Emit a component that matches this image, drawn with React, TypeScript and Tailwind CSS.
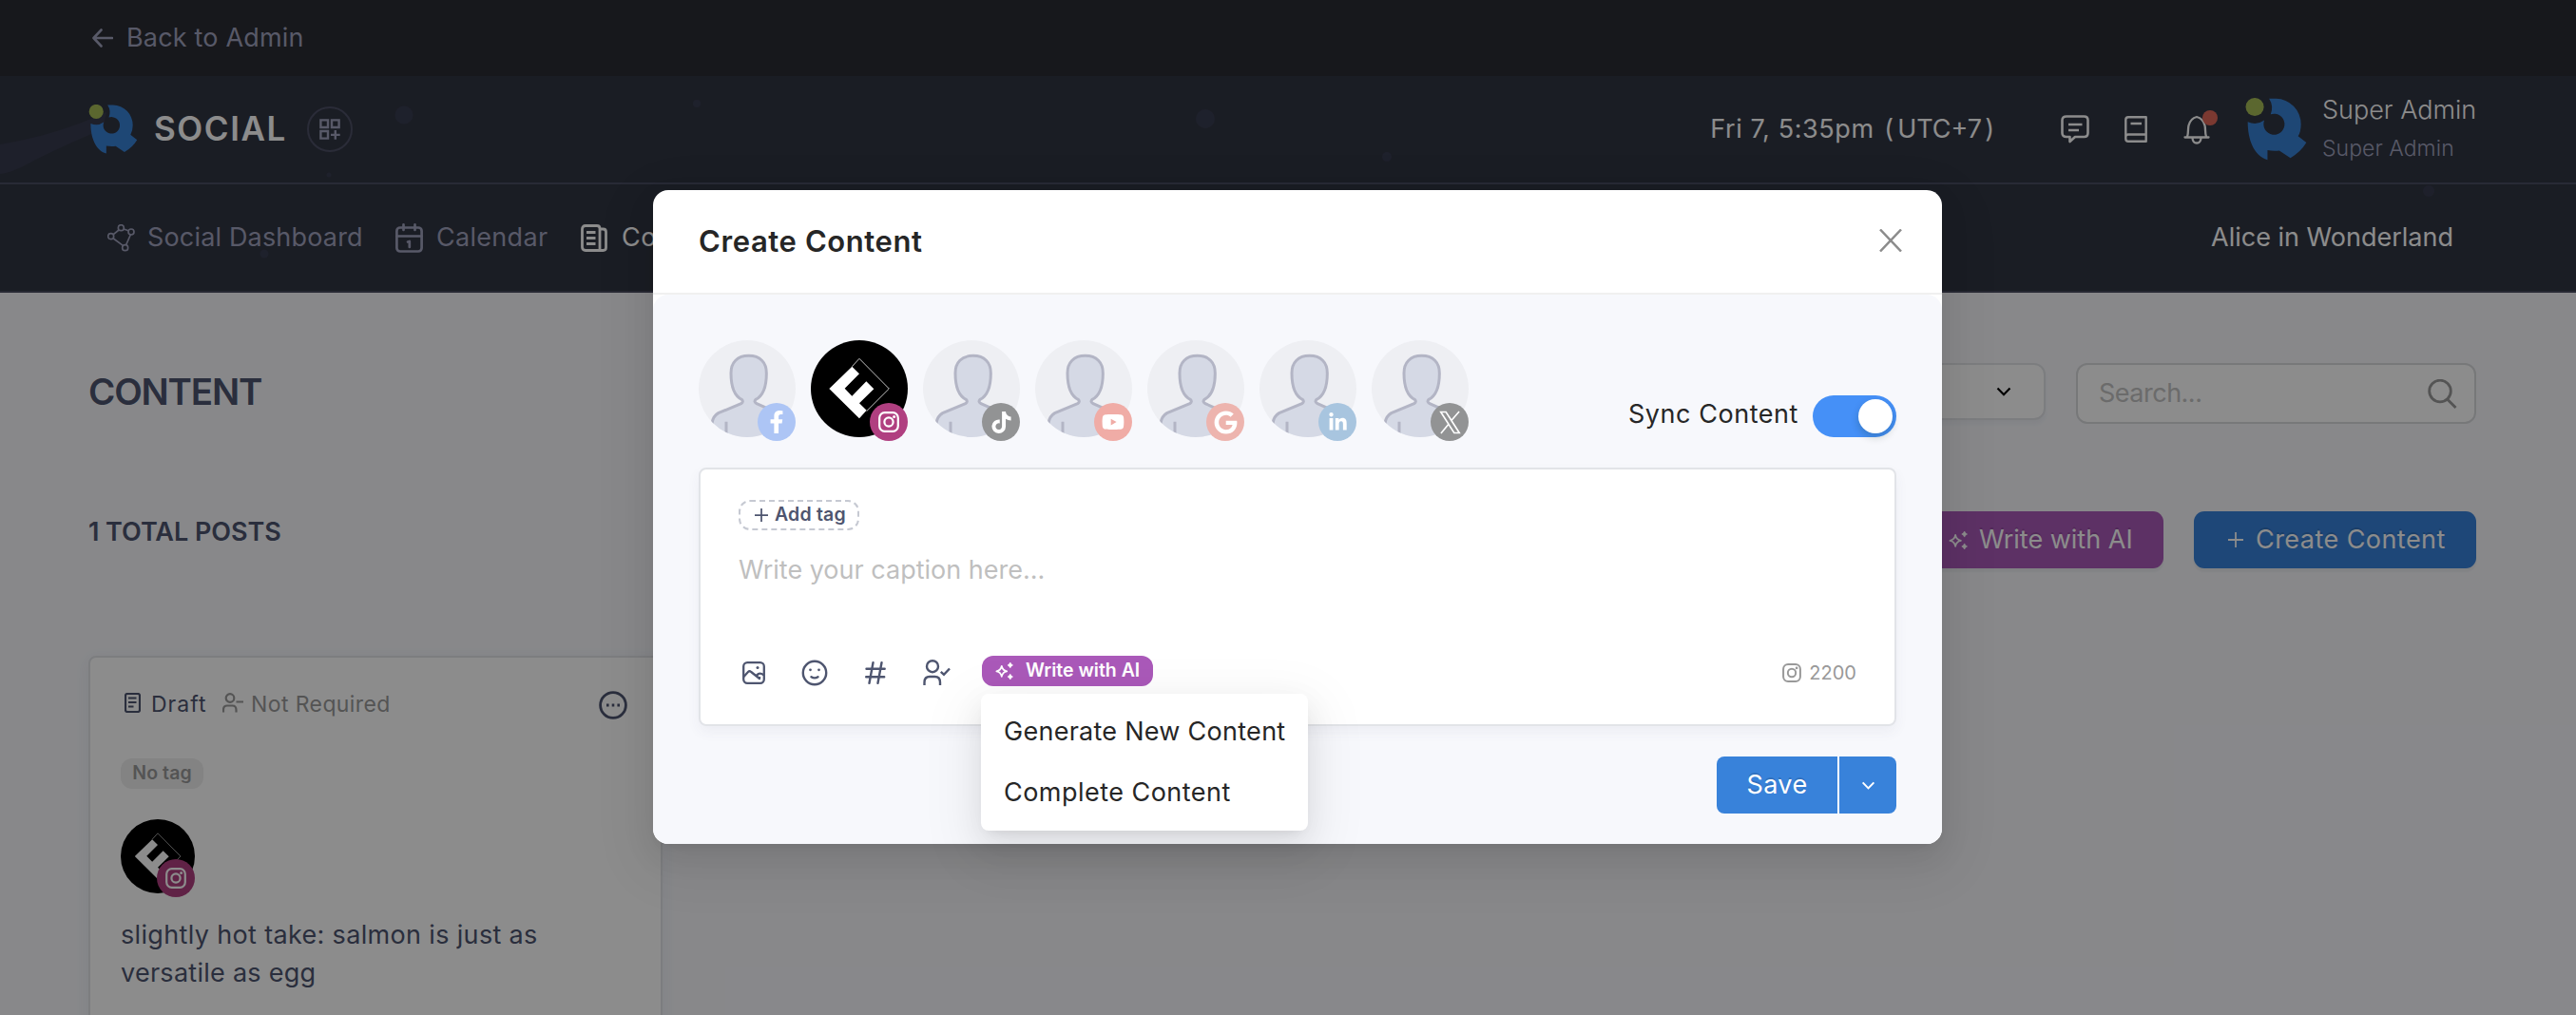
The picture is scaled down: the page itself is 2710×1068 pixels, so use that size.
import type { ReactNode } from "react";
import { FaFacebookF, FaGoogle, FaLinkedinIn, FaTiktok, FaYoutube } from "react-icons/fa";

function Logo({ className }: { className: string }) {
  return (
    <svg viewBox="638 40 194 196" className={className}>
      <circle cx="668" cy="68" r="28.5" fill="#a6bc57" />
      <path
        fill="#3882d5"
        d="M713 42H735A78 80 0 0 1 813 122Q813 145 804 160L830 180Q812 210 780 228L745 205Q727 207 708 204V234C665 222 646 170 646 115A52 52 0 0 0 698 110A33 33 0 1 0 718 91A54 54 0 0 0 713 42Z"
      />
    </svg>
  );
}

function Sparkles({ className }: { className: string }) {
  return (
    <svg viewBox="0 0 55 53" className={className}>
      <path d="M19.5 11Q22 25 35.500 27.500Q22 30 19.500 44Q17 30 3.500 27.500Q17 25 19.500 11Z" fill="none" stroke="currentColor" strokeWidth="5" strokeLinejoin="round" />
      <path d="M46 0Q48 6 54 8.500Q48 11 46 17Q44 11 38 8.500Q44 6 46 0Z M46 36Q48 42 54 44.500Q48 47 46 53Q44 47 38 44.500Q44 42 46 36Z" fill="currentColor" stroke="currentColor" strokeWidth="2" strokeLinejoin="round" />
    </svg>
  );
}

function InstagramGlyph({ className, strokeWidth = 2.2 }: { className: string; strokeWidth?: number }) {
  return (
    <svg viewBox="0 0 22 22" className={className} fill="none" stroke="currentColor" strokeWidth={strokeWidth}>
      <rect x="1.200" y="1.200" width="19.600" height="19.600" rx="5.500" />
      <circle cx="11" cy="11" r="4.600" />
      <circle cx="16.600" cy="5.400" r="1.500" fill="currentColor" stroke="none" />
    </svg>
  );
}

function XGlyph({ className }: { className: string }) {
  return (
    <svg viewBox="0 0 24 26" className={className} fill="none" stroke="currentColor" strokeWidth="1.700">
      <path d="M1.800 1.500H7.500L22.200 24.500H16.500ZM22 1L13.200 11.200M10.400 14.800L2 25" />
    </svg>
  );
}

function Plus({ className, strokeWidth = 1.8 }: { className: string; strokeWidth?: number }) {
  return (
    <svg viewBox="0 0 16 16" className={className} fill="none" stroke="currentColor" strokeWidth={strokeWidth}>
      <path d="M8 0V16M0 8H16" />
    </svg>
  );
}

function Chevron({ className, strokeWidth }: { className: string; strokeWidth: number }) {
  return (
    <svg viewBox="0 0 16 10" className={className} fill="none" stroke="currentColor" strokeWidth={strokeWidth}>
      <path d="M1.500 1.500L8 8.200L14.500 1.500" />
    </svg>
  );
}

function BrandMark({ className }: { className: string }) {
  return (
    <svg viewBox="0 0 306 306" className={className}>
      <circle cx="153" cy="153" r="153" fill="#000" />
      <path d="M130 83L153 58L247 153L176 224" fill="none" stroke="#c4c4c4" strokeWidth="3" />
      <path d="M58 153L130 83L153 106L107 152L130 176L175 130L199 154L153 199L176 221L153 247Z" fill="#fff" />
    </svg>
  );
}

function Person({ id, className }: { id: string; className: string }) {
  return (
    <svg viewBox="0 0 306 306" className={className}>
      <clipPath id={id}>
        <circle cx="153" cy="153" r="153" />
      </clipPath>
      <g clipPath={`url(#${id})`}>
        <rect width="306" height="306" fill="#eeeff3" />
        <path
          d="M158 49C194 49 214 70 214 104C214 148 202 176 180 187Q173 194 183 200L250 230Q275 245 275 330L42 330V262Q45 240 62 230L134 200Q143 194 136 187C114 176 102 148 102 104C102 70 122 49 158 49Z"
          fill="#d5d9e5"
          stroke="#b3b5c5"
          strokeWidth="9"
        />
        <path d="M87 257V306" stroke="#b3b5c5" strokeWidth="9" />
      </g>
    </svg>
  );
}

const badge = "absolute right-0 -bottom-1 flex size-10 items-center justify-center rounded-full text-white";

const accounts: { id: string; color: string; icon: ReactNode; selected?: boolean }[] = [
  { id: "facebook", color: "bg-[#adc5f5]", icon: <FaFacebookF className="size-6" /> },
  { id: "instagram", color: "bg-[#b03f80]", icon: <InstagramGlyph className="size-[22px]" />, selected: true },
  { id: "tiktok", color: "bg-[#929394]", icon: <FaTiktok className="size-[23px]" /> },
  { id: "youtube", color: "bg-[#f0aca6]", icon: <FaYoutube className="size-6" /> },
  { id: "google", color: "bg-[#edb4ae]", icon: <FaGoogle className="size-[25px]" /> },
  { id: "linkedin", color: "bg-[#a8c5df]", icon: <FaLinkedinIn className="size-[21px]" /> },
  { id: "x", color: "bg-[#929394]", icon: <XGlyph className="h-[25px] w-[23px]" /> },
];

function TopBar() {
  return (
    <div className="flex h-20 shrink-0 items-center bg-[#2a2c33] pl-[97px] text-[#a0a3bd]">
      <svg viewBox="0 0 22 20" className="mr-3.5 h-5 w-[22px]" fill="none" stroke="currentColor" strokeWidth="2.600" strokeLinecap="round" strokeLinejoin="round">
        <path d="M21 10H2M9.500 1.500L1.500 10L9.500 18.500" />
      </svg>
      <span className="text-[27px] tracking-[0.180px]">Back to Admin</span>
    </div>
  );
}

function Particles() {
  return (
    <svg viewBox="0 0 2710 228" className="absolute inset-0 h-[228px] w-[2710px]" fill="#3b3f54">
      <path d="M0 72Q60 62 112 38L108 56Q60 76 30 92Q12 102 0 103Z" opacity=".7" />
      <circle cx="425" cy="41" r="9.500" opacity=".8" />
      <circle cx="1268" cy="45" r="10" opacity=".8" />
      <circle cx="733" cy="29" r="4" opacity=".8" />
      <circle cx="1459" cy="85" r="5" opacity=".8" />
      <circle cx="278" cy="187" r="4.500" opacity=".8" />
      <circle cx="346" cy="104" r="2.500" opacity=".8" />
      <circle cx="2555" cy="121" r="6" opacity=".7" />
    </svg>
  );
}

function Header() {
  return (
    <header className="relative shrink-0 bg-[#313543] whitespace-nowrap">
      <Particles />
      <div className="relative flex h-[114px] items-center border-b-2 border-[#4a4d63] pr-[105px] pl-[93px]">
        <Logo className="mr-[17px] size-[52px]" />
        <span className="-mt-0.5 w-[142px] text-[35px] font-semibold tracking-[1.600px] text-white">SOCIAL</span>
        <div className="ml-[19px] flex size-12 items-center justify-center rounded-full border-2 border-[#4d5066] text-[#a0a3bd]">
          <svg viewBox="0 0 22 22" className="size-[22px]" fill="none" stroke="currentColor" strokeWidth="2.400">
            <path d="M1.400 1.400H9V9H1.400ZM13 1.400H20.600V9H13ZM1.400 13H9V20.600H1.400ZM16.800 12V21.800M12 16.900H21.700" />
          </svg>
        </div>
        <div className="ml-auto flex items-center text-white">
          <span className="w-[175px] text-[27px] tracking-[0.600px]">Fri 7, 5:35pm</span>
          <span className="ml-2 text-[27px]">(</span>
          <span className="ml-1 w-[88px] text-[27px]">UTC+7</span>
          <span className="ml-1 text-[27px]">)</span>
          <svg viewBox="0 0 30 30" className="ml-[70px] size-[30px]" fill="none" stroke="currentColor" strokeWidth="2.600" strokeLinejoin="round">
            <path d="M6 1.500H24.500Q28.500 1.500 28.500 5.500V19Q28.500 23 24.500 23H15L9.500 28V23H6Q1.500 23 1.500 19V5.500Q1.500 1.500 6 1.500ZM8 10H22.500M8 16H19" />
          </svg>
          <svg viewBox="0 0 24 28" className="ml-[37px] h-7 w-6" fill="none" stroke="currentColor" strokeWidth="2.400" strokeLinejoin="round">
            <path d="M4 1.300H22.700V26.700H4Q1.300 26.700 1.300 24V4Q1.300 1.300 4 1.300ZM1.300 22Q1.500 19.500 4 19.500H22.500M6.500 8H18" />
          </svg>
          <div className="relative ml-[38px] h-[31px] w-7">
            <svg viewBox="0 0 28 31" className="h-[31px] w-7" fill="none" stroke="currentColor" strokeWidth="2.300" strokeLinejoin="round" strokeLinecap="round">
              <path d="M1.500 23.500H26.500M4 23C5.500 19 4.500 15 5.500 11Q7.500 3.500 14 2Q20.500 3.500 22.500 11C23.500 15 22.500 19 24 23M9.500 24.500Q10 29.500 14 29.500Q18 29.500 18.500 24.500" />
            </svg>
            <span className="absolute -top-[5px] left-5 size-4 rounded-full bg-[#e0695a]" />
          </div>
          <Logo className="ml-[37px] h-[66px] w-[65px]" />
          <div className="ml-4 flex w-[162px] flex-col font-light">
            <span className="text-[27px] leading-[41px]">Super Admin</span>
            <span className="text-[23px] leading-[41px] tracking-[0.050px] text-[#a0a3bd]">Super Admin</span>
          </div>
        </div>
      </div>
      <nav className="relative flex h-[114px] items-center border-b-2 border-[#474a5e] pl-[113px] text-[27px] text-[#a0a3bd]">
        <svg viewBox="98 422 87 87" className="size-[29px]" fill="none" stroke="currentColor" strokeWidth="5">
          <path d="M117 454L134 440M150 437L164 442M171 455L157 487M117 467L147 489" />
          <circle cx="141" cy="433" r="9" />
          <circle cx="173" cy="446" r="9" />
          <circle cx="109" cy="460" r="9" />
          <circle cx="154" cy="496" r="9" />
        </svg>
        <span className="ml-[13px] w-[226px] tracking-[0.170px]">Social Dashboard</span>
        <svg viewBox="0 0 29 31" className="ml-[35px] h-[31px] w-[29px]" fill="none" stroke="currentColor" strokeWidth="2.700" strokeLinecap="round" strokeLinejoin="round">
          <rect x="1.400" y="4.500" width="26.200" height="25" rx="3.500" />
          <path d="M1.500 13.500H27.500M8.500 1.400V7M20.500 1.400V7M13 19.500L14.800 19V25" />
        </svg>
        <span className="ml-[14px] w-[118px] tracking-[0.300px]">Calendar</span>
        <div className="ml-[34px] flex items-center gap-[15px] text-white">
          <svg viewBox="0 0 28 29" className="h-[29px] w-7" fill="none" stroke="currentColor" strokeWidth="2.800" strokeLinejoin="round">
            <path d="M5 1.500H17Q20 1.500 20 4.500V27.500H5Q1.500 27.500 1.500 24V5Q1.500 1.500 5 1.500ZM20 5H23.500Q26.500 5 26.500 8V24.500Q26.500 27.500 23.500 27.500H18M6 8.500H15.500M6 14.500H15.500M6 20.500H15.500" />
          </svg>
          <span className="tracking-[0.500px]">Content</span>
        </div>
        <span className="mr-[129px] ml-auto text-white">Alice in Wonderland</span>
      </nav>
    </header>
  );
}

function PostCard() {
  return (
    <article className="mt-[92px] h-[480px] w-[604px] rounded-lg border-2 border-[#e2e4e8] bg-white p-8 text-[#4e556f] shadow-[0_4px_16px_rgba(60,70,110,0.070)]">
      <div className="flex h-9 items-center text-[23px]">
        <svg viewBox="0 0 17 21" className="ml-1 h-[21px] w-[17px] -translate-y-[3px]" fill="none" stroke="currentColor" strokeWidth="2.200">
          <path d="M3 1H14Q16 1 16 3V18Q16 20 14 20H3Q1 20 1 18V3Q1 1 3 1ZM4 5.500H12.500M4 10H12.500M4 14.500H9.500" />
        </svg>
        <span className="-mt-0.5 ml-[11px] w-[64px] tracking-[1px]">Draft</span>
        <svg viewBox="0 0 22 21" className="ml-[11px] h-[21px] w-[22px] -translate-y-[3px] text-[#9a9a9a]" fill="none" stroke="currentColor" strokeWidth="2.200">
          <circle cx="8" cy="5.500" r="4.300" />
          <path d="M1 20.500V18Q1 13.500 5 13.500H10.500Q14.500 13.500 14.500 18V20.500M14.500 9.500H22" />
        </svg>
        <span className="-mt-0.5 ml-[8px] tracking-[0.400px] text-[#9a9a9a]">Not Required</span>
        <svg viewBox="0 0 30 30" className="mr-[3px] ml-auto size-[30px]" fill="none" stroke="currentColor" strokeWidth="2.800">
          <circle cx="15" cy="15" r="13.400" />
          <path d="M8 15h2.600M13.700 15h2.600M19.400 15h2.600" />
        </svg>
      </div>
      <div className="mt-[38px] flex h-8 w-[87px] items-center justify-center rounded-[12px] bg-[#efefef] text-[19.500px] font-semibold tracking-[0.050px] text-[#9a9a9a]">No tag</div>
      <div className="relative mt-8 size-[78px]">
        <BrandMark className="size-[78px]" />
        <span className={`${badge} bg-[#b03f80]`}>
          <InstagramGlyph className="size-[22px]" />
        </span>
      </div>
      <p className="mt-6 text-[27px] leading-10">
        <span className="tracking-[0.340px]">slightly hot take: salmon is just as</span>
        <br />
        <span className="tracking-[0.270px]">versatile as egg</span>
      </p>
    </article>
  );
}

function Page() {
  return (
    <main className="flex-1 bg-[#f7f8fc] pt-[74px] pr-[105px] pl-[93px]">
      <div className="flex h-16 items-start">
        <h1 className="text-[38.500px] leading-[60px] font-semibold tracking-[-1.200px] text-[#4e556f]">CONTENT</h1>
        <div className="ml-auto flex h-[60px] w-[400px] items-center justify-end rounded-[12px] border-2 border-[#e2e4e8] bg-white pr-[34px] shadow-[0_4px_4px_rgba(60,70,110,0.050)]">
          <Chevron className="h-[10px] w-4" strokeWidth={2.2} />
        </div>
        <div className="ml-8 flex h-16 w-[421px] items-center justify-between rounded-[12px] border-2 border-[#d9dadd] bg-white pr-[18px] pl-[22px]">
          <span className="text-[27px] tracking-[-0.500px] text-[#c3c3c3]">Search...</span>
          <svg viewBox="0 0 31 31" className="size-[31px]" fill="none" stroke="#999" strokeWidth="2.800">
            <circle cx="13" cy="12.500" r="11.300" />
            <path d="M20.500 21L29.500 30" />
          </svg>
        </div>
      </div>
      <div className="mt-[92px] flex h-[60px] items-center">
        <h2 className="-mt-4 text-[27px] font-semibold tracking-[-0.050px] text-[#4e556f]">1 TOTAL POSTS</h2>
        <button className="ml-auto flex h-[60px] w-[262px] items-center rounded-[11px] bg-[#aa59b9] pl-9 text-[27px] text-white shadow-[0_4px_2px_rgba(0,0,0,0.045)]">
          <Sparkles className="mr-[12px] h-[19px] w-5" />
          <span className="[text-shadow:0_-2px_0_rgba(0,0,0,0.120)]">Write with AI</span>
        </button>
        <button className="ml-8 flex h-[60px] w-[297px] items-center rounded-[11px] bg-[#3882da] pl-9 text-[27px] text-white shadow-[0_4px_2px_rgba(0,0,0,0.045)]">
          <Plus className="mr-[13px] size-4" />
          <span className="tracking-[0.450px] [text-shadow:0_-2px_0_rgba(0,0,0,0.120)]">Create Content</span>
        </button>
      </div>
      <PostCard />
    </main>
  );
}

function AiMenu() {
  return (
    <div className="absolute top-10 -left-px z-10 w-[344px] rounded-lg bg-white py-2 text-[27px] text-[#262626] shadow-[0_6px_12px_-8px_rgba(0,0,0,0.120),0_12px_32px_0_rgba(0,0,0,0.080),0_18px_56px_16px_rgba(0,0,0,0.050)]">
      <div className="flex h-16 items-center pl-6 tracking-[0.270px]">Generate New Content</div>
      <div className="flex h-16 items-center pl-6 tracking-[0.470px]">Complete Content</div>
    </div>
  );
}

function Toolbar() {
  return (
    <div className="flex h-9 items-center text-[#4e556f]">
      <svg viewBox="0 0 24 24" className="ml-1 size-6" fill="none" stroke="currentColor" strokeWidth="2.300" strokeLinejoin="round">
        <rect x="1.200" y="1.200" width="21.600" height="21.600" rx="4" />
        <path d="M1.500 16L6 11Q7.500 9.500 9.200 11L18 18V16" />
        <path d="M14.500 15L17 13Q19 11.800 22.500 14.200" />
        <circle cx="16" cy="6.500" r="1.500" fill="currentColor" stroke="none" />
      </svg>
      <svg viewBox="0 0 28 28" className="ml-[38px] size-7" fill="none" stroke="currentColor" strokeWidth="2.400" strokeLinecap="round">
        <circle cx="14" cy="14" r="12.200" />
        <path d="M10.500 18.200Q14 20.500 17.500 18.200" />
        <path d="M9.500 10.800h.01M18.500 10.800h.01" strokeWidth="2.800" />
      </svg>
      <svg viewBox="0 0 22 24" className="ml-[39px] h-6 w-[22px]" fill="none" stroke="currentColor" strokeWidth="2.400" strokeLinecap="round">
        <path d="M1.500 7.800H20.700M1.200 16.300H20.200M8.500 1.200L4.500 22.800M17.500 1.200L13.500 22.800" />
      </svg>
      <svg viewBox="0 0 29 28" className="ml-[39px] h-7 w-[29px]" fill="none" stroke="currentColor" strokeWidth="2.400">
        <circle cx="10" cy="7.200" r="6" />
        <path d="M1.500 27V24Q1.500 18 7 18H12.500Q18 18 18 24V27M18.800 12.800L22 15.800L28 9.500" />
      </svg>
      <div className="relative -mt-1 ml-[33px]">
        <button className="flex h-8 w-[180px] items-center rounded-[12px] bg-[#aa59b9] pl-3.5 text-[19.500px] text-white">
          <Sparkles className="mr-[13px] h-[18px] w-[19px]" />
          <span className="font-semibold">Write with AI</span>
        </button>
        <AiMenu />
      </div>
      <div className="ml-auto flex items-center text-[#999]">
        <InstagramGlyph className="size-5" />
        <span className="ml-2 text-[20px]">2200</span>
      </div>
    </div>
  );
}

function CreateContentModal() {
  return (
    <div className="absolute inset-0 bg-black/45 pt-[200px] pl-[687px]">
      <div className="h-[688px] w-[1356px] rounded-2xl bg-white shadow-[0_6px_12px_-8px_rgba(0,0,0,0.120),0_12px_32px_0_rgba(0,0,0,0.080),0_18px_56px_16px_rgba(0,0,0,0.050)]">
        <div className="flex h-[110px] items-center justify-between border-b-2 border-[#f0f0f0] pr-[42px] pl-12">
          <h2 className="text-[31px] font-semibold tracking-[0.600px] text-[#262626]">Create Content</h2>
          <svg viewBox="0 0 24 24" className="-mt-0.5 size-6" fill="none" stroke="#8c8c8c" strokeWidth="2.500">
            <path d="M1 0.500L23 23.500M23 0.500L1 23.500" />
          </svg>
        </div>
        <div className="h-[578px] rounded-2xl bg-[#f7f8fc] px-12 pt-12">
          <div className="flex h-[102px] gap-4">
            {accounts.map((a) => (
              <div key={a.id} className="relative size-[102px]">
                {a.selected ? <BrandMark className="size-[102px]" /> : <Person id={a.id} className="size-[102px]" />}
                <span className={`${badge} ${a.color}`}>{a.icon}</span>
              </div>
            ))}
            <div className="ml-auto flex items-center gap-[15px] self-end">
              <span className="-mt-1 text-[27px] tracking-[0.550px] text-[#262626]">Sync Content</span>
              <div className="flex h-11 w-[88px] items-center justify-end rounded-full bg-[#4590f7] pr-1">
                <span className="size-9 rounded-full bg-white shadow-[0_4px_8px_rgba(0,35,11,0.200)]" />
              </div>
            </div>
          </div>
          <div className="mt-8 flex h-[272px] flex-col rounded-lg border-2 border-[#e2e4e8] bg-white px-10 pt-8 shadow-[0_6px_14px_rgba(60,70,110,0.060)]">
            <div className="flex h-8 w-[127px] items-center rounded-[12px] border-2 border-dashed border-[#c6c9d2] pl-[15px] text-[#4e556f]">
              <Plus className="mr-[7px] size-3.5" strokeWidth={2} />
              <span className="text-[19.500px] font-semibold tracking-[0.200px]">Add tag</span>
            </div>
            <div className="mt-[22px] text-[27px] leading-10 text-[#bfbfbf]">Write your caption here...</div>
            <div className="mt-[70px]">
              <Toolbar />
            </div>
          </div>
          <div className="mt-8 flex h-[60px] justify-end text-white">
            <button className="w-[127px] rounded-l-lg bg-[#3882da] text-[27px] tracking-[0.400px] [text-shadow:0_-2px_0_rgba(0,0,0,0.120)]">Save</button>
            <button className="flex w-[62px] items-center justify-center rounded-r-lg border-l-2 border-white bg-[#3882da]">
              <Chevron className="h-[9px] w-[15px]" strokeWidth={2.2} />
            </button>
          </div>
        </div>
      </div>
    </div>
  );
}

export default function App() {
  return (
    <div className="relative flex h-[1068px] w-[2710px] flex-col overflow-hidden font-[Inter,sans-serif]">
      <TopBar />
      <Header />
      <Page />
      <CreateContentModal />
    </div>
  );
}
